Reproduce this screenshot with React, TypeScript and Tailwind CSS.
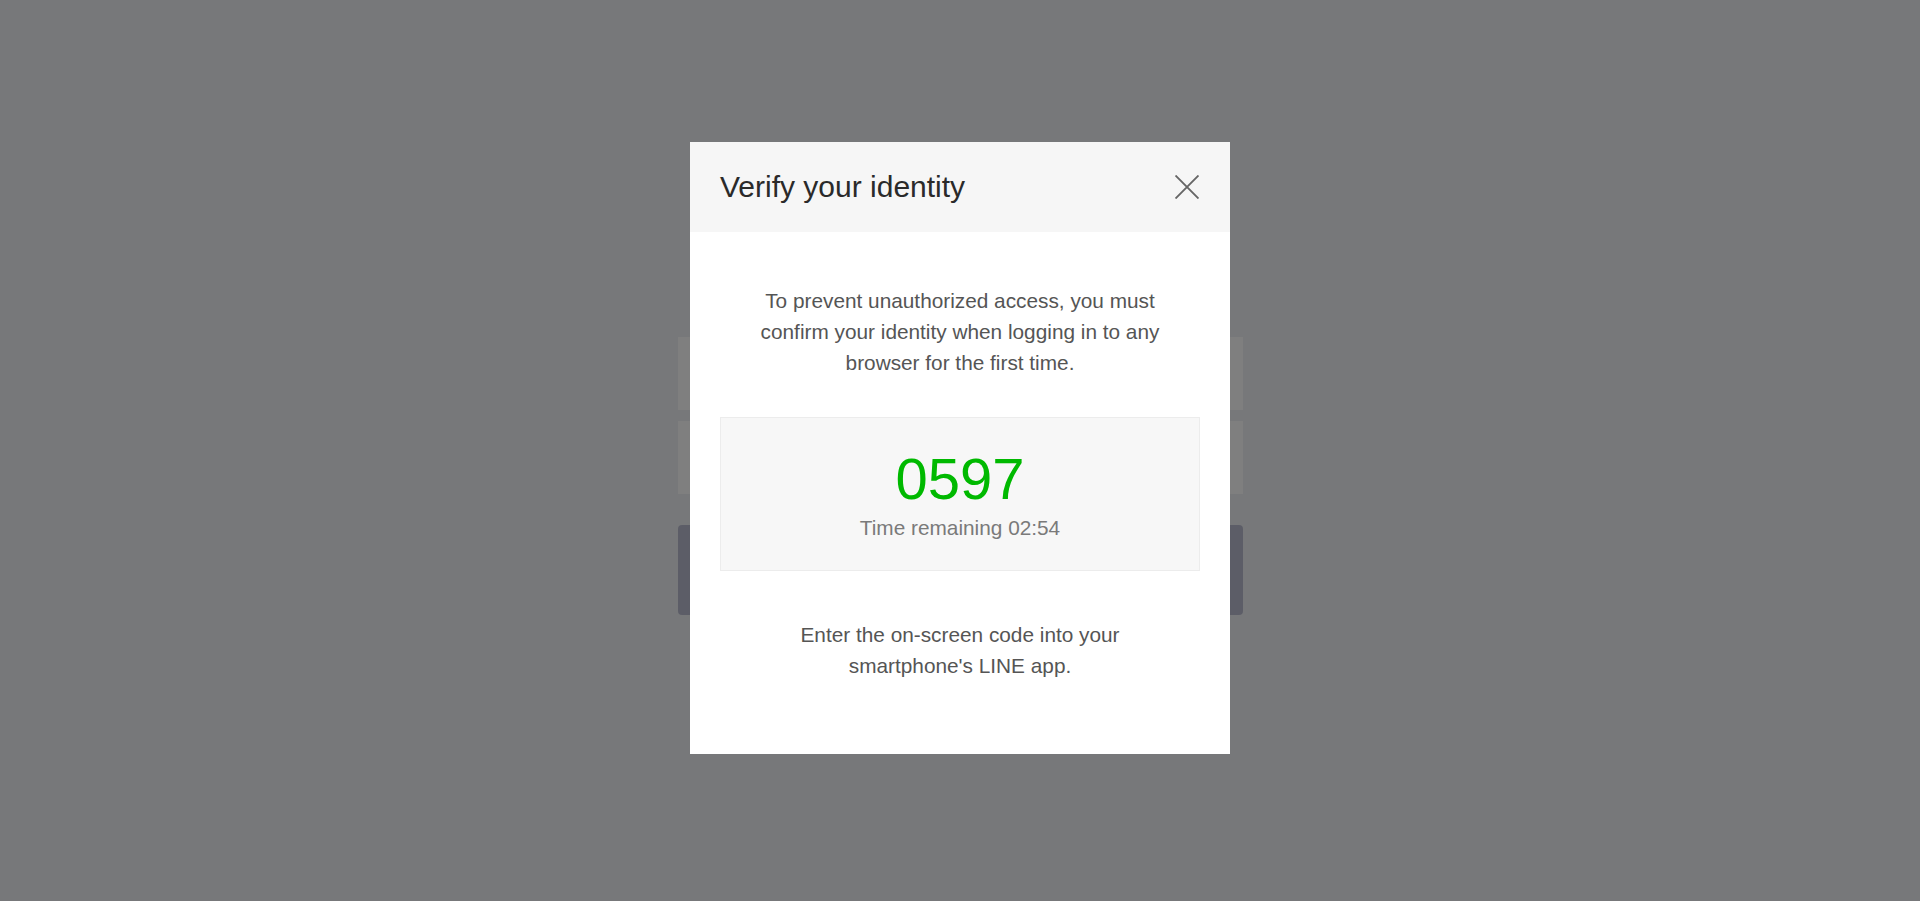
import React from 'react';

const font = { fontFamily: '"Liberation Sans", Arial, sans-serif' };

function CloseIcon() {
  return (
    <svg width="24" height="24" viewBox="0 0 24 24" fill="none" stroke="#666" strokeWidth="1.9">
      <path d="M0.5 0.5 L23.5 23.5 M23.5 0.5 L0.5 23.5" />
    </svg>
  );
}

/**
 * The login page that sits under the dimmed overlay: only the two inputs and
 * the submit button peek out from behind the dialog.
 */
function LoginBackdrop() {
  return (
    <div className="flex min-h-[901px] w-full justify-center bg-[#eef0f4] pt-[337px]">
      <div className="flex w-[565px] flex-col">
        <div className="h-[73px] bg-white" />
        <div className="mt-[11px] h-[73px] bg-white" />
        <div className="mt-[31px] h-[90px] rounded-[4px] bg-[#b9bbcf]" />
      </div>
    </div>
  );
}

export default function App() {
  return (
    <div className="relative min-h-[901px] w-full overflow-hidden" style={font}>
      <LoginBackdrop />

      <div className="fixed inset-0 flex justify-center bg-black/50 pt-[142px]">
        <div className="flex h-[612px] w-[540px] flex-col bg-white">
          <div className="flex h-[90px] shrink-0 items-center justify-between bg-[#f6f6f6] pl-[30px] pr-[31px]">
            <h2 className="text-[30px] leading-none text-[#2a2a2a]">Verify your identity</h2>
            <button className="flex h-[24px] w-[24px] items-center justify-center">
              <CloseIcon />
            </button>
          </div>

          <div className="flex flex-col px-[30px] pt-[54px]">
            <p className="px-[30px] text-center text-[20.8px] leading-[30.75px] text-[#555]">
              To prevent unauthorized access, you must confirm your identity when logging in to any
              browser for the first time.
            </p>

            <div className="mt-[39px] flex h-[154px] flex-col items-center border border-[#ececec] bg-[#f7f7f7] pt-[32px]">
              <span className="text-[58px] leading-[58px] text-[#00b900]">0597</span>
              <span className="mt-[5px] text-[20.8px] leading-[30.75px] text-[#7a7a7a]">
                Time remaining 02:54
              </span>
            </div>

            <p className="mt-[49px] px-[30px] text-center text-[20.8px] leading-[30.75px] text-[#555]">
              Enter the on-screen code into your smartphone's LINE app.
            </p>
          </div>
        </div>
      </div>
    </div>
  );
}
